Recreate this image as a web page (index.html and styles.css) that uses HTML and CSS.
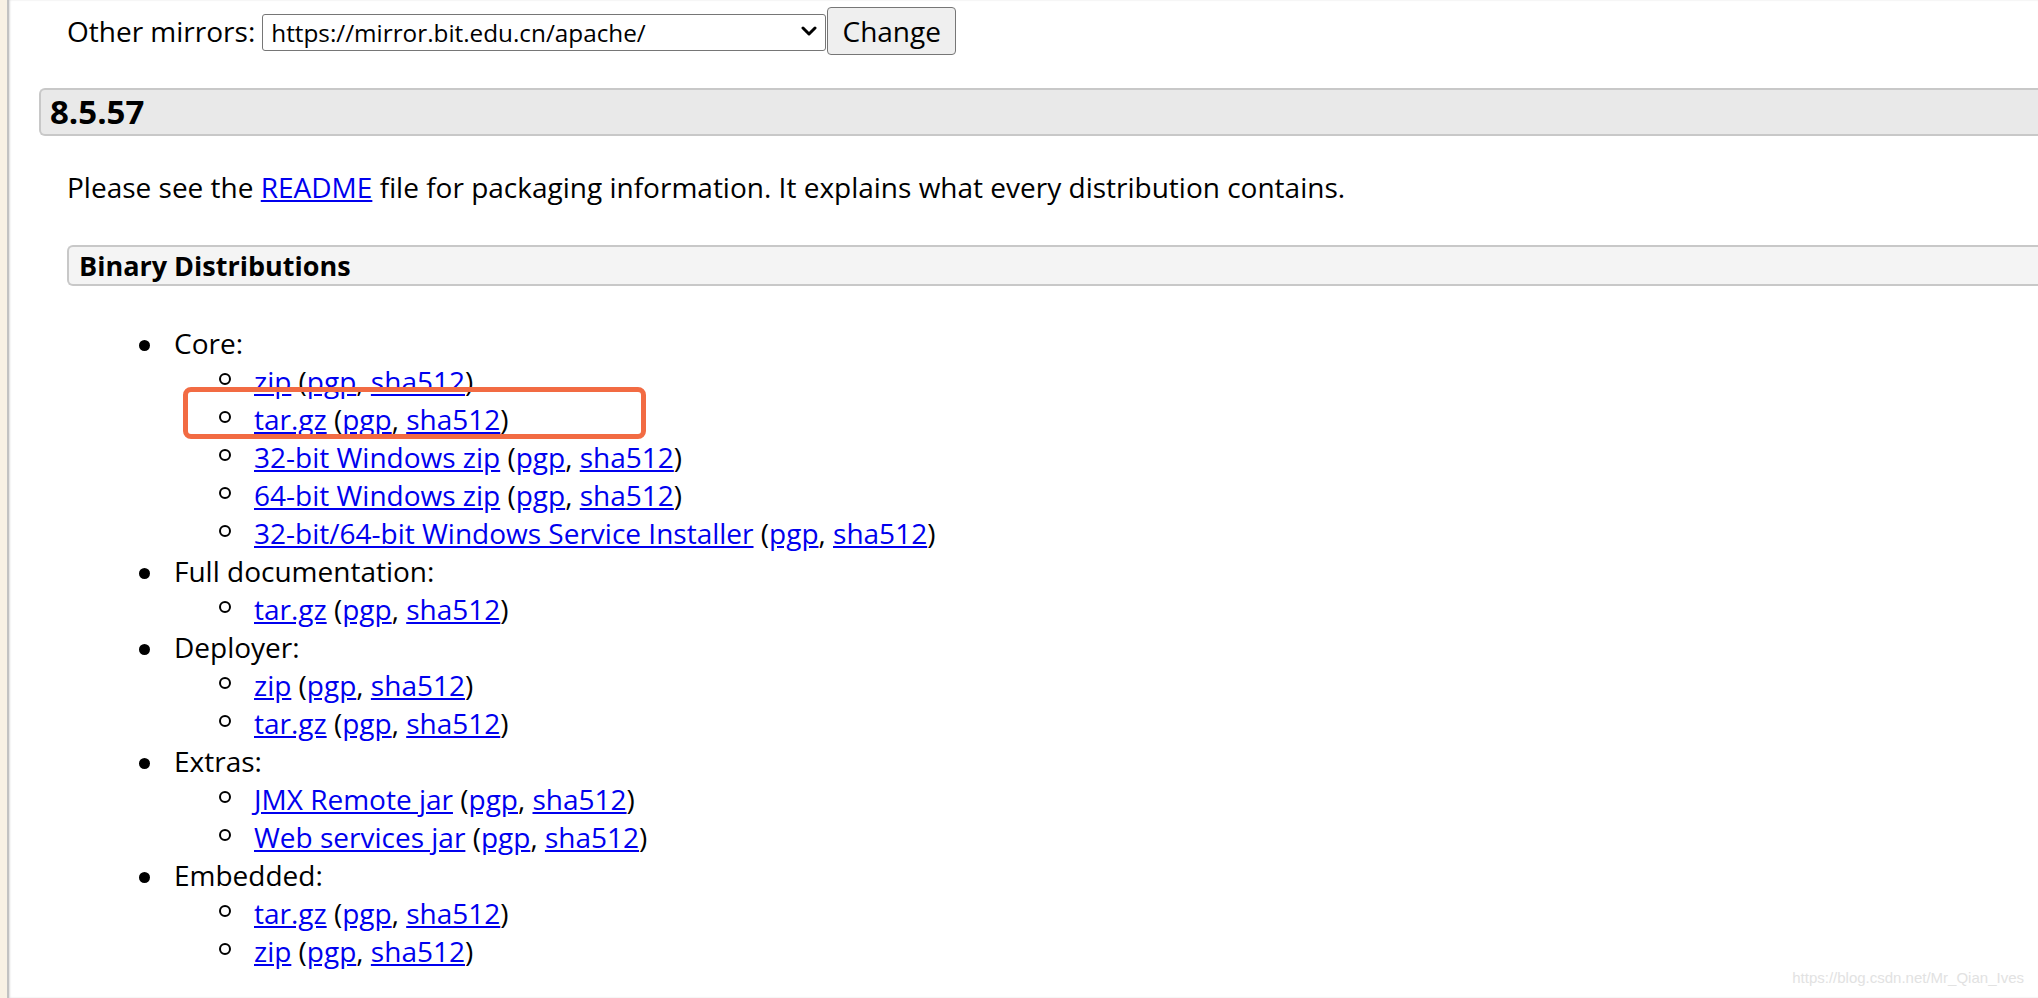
FILE: index.html
```html
<!DOCTYPE html>
<html lang="en">
<head>
<meta charset="utf-8">
<title>Apache Tomcat 8 Downloads</title>
<link rel="stylesheet" href="styles.css">
</head>
<body>
<div class="page">
  <main class="main">
    <form class="mirror-row">
      <label class="mirror-label">Other mirrors:</label>
      <span class="select-wrap">
        <select class="mirror-select"><option>https://mirror.bit.edu.cn/apache/</option></select>
        <svg class="chev" width="16" height="10" viewBox="0 0 16 10"><path d="M2 2 L8 8 L14 2" stroke="#000" stroke-width="3" fill="none" stroke-linecap="round" stroke-linejoin="round"/></svg>
      </span><button class="change-btn" type="button">Change</button>
    </form>

    <h3 class="version-bar">8.5.57</h3>

    <div class="section-body">
      <p class="intro">Please see the <a href="#">README</a> file for packaging information. It explains what every distribution contains.</p>

      <h4 class="dist-bar">Binary Distributions</h4>

      <ul class="dist-list">
        <li>Core:
          <ul class="sub-list">
            <li><a href="#">zip</a> (<a href="#">pgp</a>, <a href="#">sha512</a>)</li>
            <li><a href="#">tar.gz</a> (<a href="#">pgp</a>, <a href="#">sha512</a>)</li>
            <li><a href="#">32-bit Windows zip</a> (<a href="#">pgp</a>, <a href="#">sha512</a>)</li>
            <li><a href="#">64-bit Windows zip</a> (<a href="#">pgp</a>, <a href="#">sha512</a>)</li>
            <li><a href="#">32-bit/64-bit Windows Service Installer</a> (<a href="#">pgp</a>, <a href="#">sha512</a>)</li>
          </ul>
        </li>
        <li>Full documentation:
          <ul class="sub-list">
            <li><a href="#">tar.gz</a> (<a href="#">pgp</a>, <a href="#">sha512</a>)</li>
          </ul>
        </li>
        <li>Deployer:
          <ul class="sub-list">
            <li><a href="#">zip</a> (<a href="#">pgp</a>, <a href="#">sha512</a>)</li>
            <li><a href="#">tar.gz</a> (<a href="#">pgp</a>, <a href="#">sha512</a>)</li>
          </ul>
        </li>
        <li>Extras:
          <ul class="sub-list">
            <li><a href="#">JMX Remote jar</a> (<a href="#">pgp</a>, <a href="#">sha512</a>)</li>
            <li><a href="#">Web services jar</a> (<a href="#">pgp</a>, <a href="#">sha512</a>)</li>
          </ul>
        </li>
        <li>Embedded:
          <ul class="sub-list">
            <li><a href="#">tar.gz</a> (<a href="#">pgp</a>, <a href="#">sha512</a>)</li>
            <li><a href="#">zip</a> (<a href="#">pgp</a>, <a href="#">sha512</a>)</li>
          </ul>
        </li>
      </ul>
    </div>
  </main>

  <div class="highlight-box"></div>
  <div class="watermark">https://blog.csdn.net/Mr_Qian_Ives</div>
</div>
</body>
</html>
```

FILE: styles.css
```css
html, body {
  margin: 0;
  padding: 0;
  background: #ffffff;
}

body {
  font-family: "Open Sans", "Liberation Sans", sans-serif;
  font-size: 28px;
  color: #000;
}

.page {
  position: relative;
  min-height: 998px;
  overflow: hidden;
  border-left: 7px solid #f8f1e4;
}

.main {
  min-height: 998px;
  border-left: 2px solid #c2c2c2;
  box-shadow: inset 1px 0 2px #dcdcdc;
  padding-left: 30px;
}

/* mirror selector row */
.mirror-row {
  display: flex;
  align-items: center;
  margin: 0 0 0 28px;
  padding-top: 7px;
}

.mirror-label {
  font-size: 28px;
  line-height: 38px;
  margin-right: 7px;
}

.select-wrap {
  position: relative;
  display: inline-block;
}

.mirror-select {
  -webkit-appearance: none;
  appearance: none;
  width: 564px;
  height: 37px;
  box-sizing: border-box;
  border: 1px solid #767676;
  border-radius: 3px;
  background: #fff;
  font-family: "Open Sans", "Liberation Sans", sans-serif;
  font-size: 24.3px;
  color: #000;
  padding: 0 30px 0 8px;
  margin: 0;
}

.chev {
  position: absolute;
  right: 9px;
  top: 14px;
  pointer-events: none;
}

.change-btn {
  width: 129px;
  height: 48px;
  box-sizing: border-box;
  margin-left: 1px;
  border: 1px solid #767676;
  border-radius: 4px;
  background: #efefef;
  font-family: "Open Sans", "Liberation Sans", sans-serif;
  font-size: 28px;
  color: #000;
  padding: 0;
}

/* version header */
.version-bar {
  margin: 33px 0 0;
  border: 2px solid #c8c8c8;
  border-right: none;
  border-radius: 6px 0 0 6px;
  background: #e9e9e9;
  padding-left: 9px;
  font-size: 33px;
  font-weight: 700;
  line-height: 44px;
}

.section-body {
  padding-left: 28px;
}

.intro {
  margin: 32px 0 0;
  line-height: 38px;
}

a {
  color: #0000ee;
  text-decoration: underline;
}

.dist-bar {
  margin: 39px 0 0;
  border: 2px solid #c8c8c8;
  border-right: none;
  border-radius: 6px 0 0 6px;
  background: #f4f4f4;
  padding-left: 10px;
  font-size: 27px;
  font-weight: 700;
  line-height: 37px;
}

.dist-list {
  list-style: none;
  margin: 38px 0 0;
  padding-left: 107px;
}

.dist-list li {
  position: relative;
  line-height: 38px;
}

.dist-list > li::before {
  content: "";
  position: absolute;
  left: -35px;
  top: 16px;
  width: 11px;
  height: 11px;
  border-radius: 50%;
  background: #000;
}

.sub-list {
  list-style: none;
  margin: 0;
  padding-left: 80px;
}

.sub-list > li::before {
  content: "";
  position: absolute;
  left: -35px;
  top: 11px;
  width: 8px;
  height: 8px;
  border-radius: 50%;
  border: 2px solid #000;
  background: transparent;
}

/* annotation overlay */
.highlight-box {
  position: absolute;
  left: 176px;
  top: 387px;
  width: 453px;
  height: 42px;
  border: 5px solid #f26b43;
  border-radius: 8px;
}

.watermark {
  position: absolute;
  right: 14px;
  top: 969px;
  font-family: "Liberation Sans", Arial, sans-serif;
  font-size: 15px;
  color: #e2e2e2;
}
```
